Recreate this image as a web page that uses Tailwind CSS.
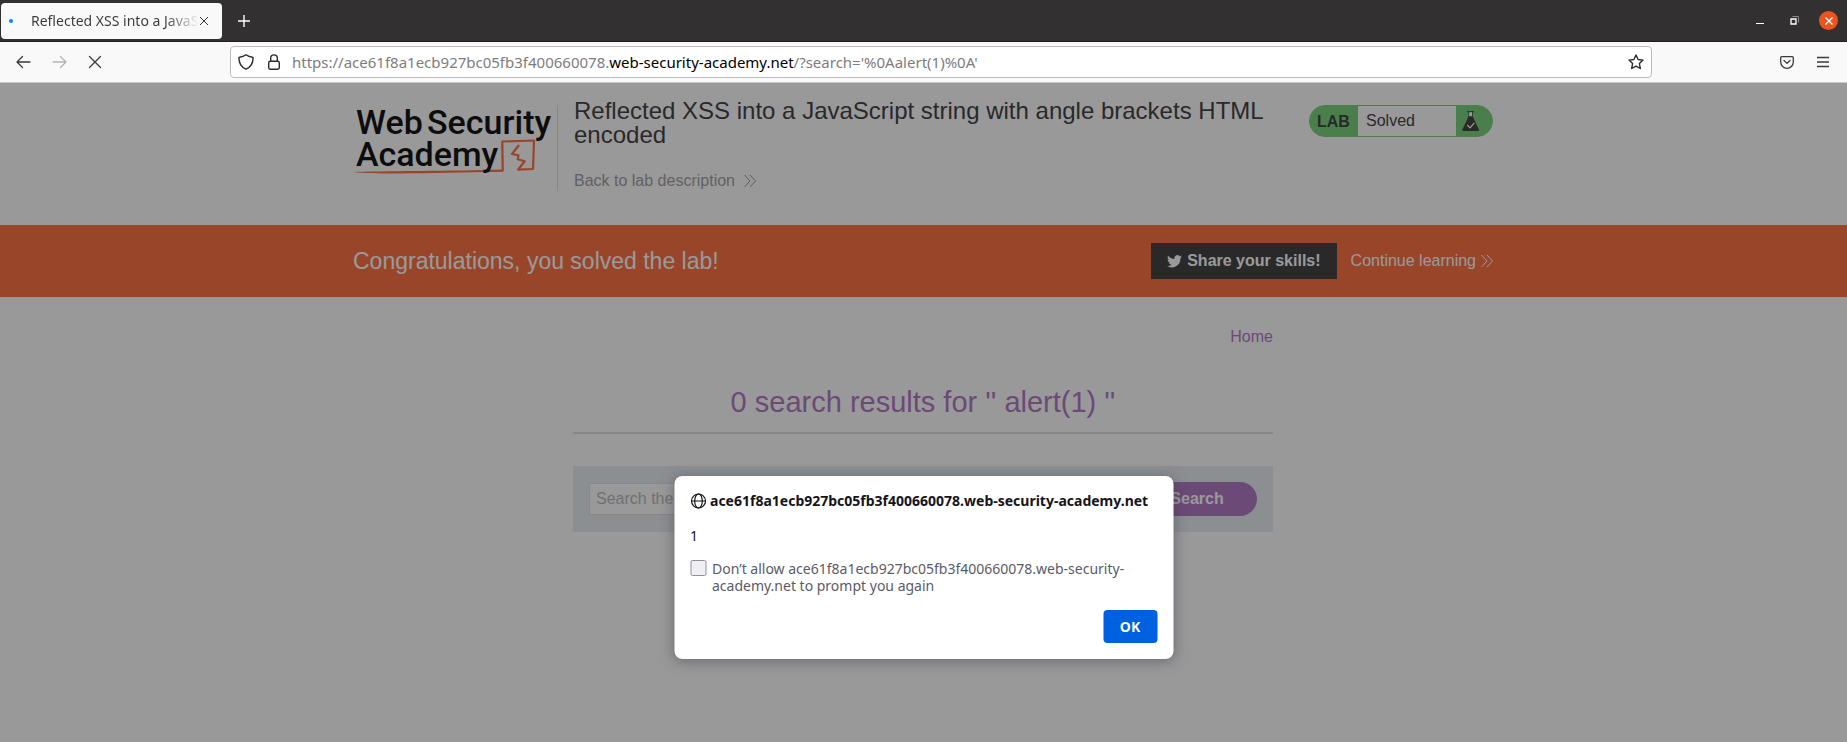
<!DOCTYPE html>
<html lang="en">
<head>
<meta charset="utf-8">
<title>Reflected XSS into a JavaScript string with angle brackets HTML encoded</title>
<script src="https://cdn.jsdelivr.net/npm/@tailwindcss/browser@4"></script>
</head>
<body class="flex min-h-screen flex-col bg-white font-['Noto_Sans',sans-serif] text-[#15141a]">

<!-- Tab strip -->
<header class="flex h-[42px] items-center border-b border-[#1f1e1e] bg-[#333031] pr-[9px] pl-px">
  <div class="flex h-9 w-[221px] items-center rounded bg-[#f9f9f9] pr-3 pl-2">
    <span class="size-1 rounded-full bg-[#0a84ff]"></span>
    <span class="ml-[18px] w-[168px] overflow-hidden bg-linear-to-r from-[#3a3a3c] from-80% to-transparent bg-clip-text text-sm whitespace-nowrap text-transparent">Reflected XSS into a JavaScript string</span>
    <button class="shrink-0" aria-label="Close tab"><svg class="block size-[10px]" viewBox="0 0 10 10" fill="none" stroke="#333" stroke-width="1"><path d="M1 1l8 8M9 1L1 9"/></svg></button>
  </div>
  <button class="ml-4" aria-label="New tab"><svg class="block size-3" viewBox="0 0 12 12" fill="none" stroke="#fff" stroke-width="1.4"><path d="M6 0v12M0 6h12"/></svg></button>
  <div class="ml-auto flex items-center">
    <button aria-label="Minimize"><svg class="block h-4 w-2" viewBox="0 0 8 16" fill="none" stroke="#fff"><path d="M0 10.500h8"/></svg></button>
    <button class="ml-[26px]" aria-label="Restore"><svg class="block size-[9px]" viewBox="0 0 9 9" fill="none"><path d="M2.500 .5h6v6" stroke="#8b898a"/><path d="M1 3h5v5H1z" stroke="#fff" stroke-width="1.300"/></svg></button>
    <button class="ml-5 flex size-[19px] items-center justify-center rounded-full bg-[#e95420]" aria-label="Close window"><svg class="block size-2" viewBox="0 0 8 8" fill="none" stroke="#fff" stroke-width="1.400"><path d="M.5.5l7 7M7.500.5l-7 7"/></svg></button>
  </div>
</header>

<!-- Navigation toolbar -->
<nav class="flex h-[41px] items-center border-b border-[#c9c9cb] bg-[#f9f9fa] px-4">
  <button aria-label="Back"><svg class="block h-3.5 w-[15px]" viewBox="0 0 15 14" fill="none" stroke="#3a3a3c" stroke-width="1.300" stroke-linecap="round" stroke-linejoin="round"><path d="M14 7H1M6.500 1.500L1 7l5.500 5.500"/></svg></button>
  <button class="ml-[21px]" aria-label="Forward" disabled><svg class="block h-3.5 w-[15px]" viewBox="0 0 15 14" fill="none" stroke="#b4b4b6" stroke-width="1.300" stroke-linecap="round" stroke-linejoin="round"><path d="M1 7h13M8.500 1.500L14 7l-5.500 5.500"/></svg></button>
  <button class="ml-[21px]" aria-label="Stop"><svg class="block size-3.5" viewBox="0 0 14 14" fill="none" stroke="#3a3a3c" stroke-width="1.300" stroke-linecap="round"><path d="M1.500 1.500l11 11M12.500 1.500l-11 11"/></svg></button>
  <div class="ml-32 flex h-8 flex-1 items-center rounded border border-[#bcbcbf] bg-white px-[7px]">
    <svg class="block size-4" viewBox="0 0 16 16" fill="none" stroke="#2a2a2e" stroke-width="1.400" stroke-linejoin="round"><path d="M8 .8C6.200 2.100 3.900 2.900 1.400 3.200c-.3 0-.5.3-.5.600 0 6 2.600 9.600 7.100 11.400 4.500-1.800 7.100-5.400 7.100-11.400 0-.3-.2-.600-.5-.600C12.100 2.900 9.800 2.100 8 .8z"/></svg>
    <svg class="ml-3 block size-4" viewBox="0 0 16 16" fill="none" stroke="#2a2a2e" stroke-width="1.400"><rect x="2.700" y="7.200" width="10.600" height="8" rx="1.600"/><path d="M4.700 7V4.200a3.300 3.300 0 0 1 6.600 0V7"/></svg>
    <div class="ml-[10px] flex-1 text-[15px] whitespace-nowrap text-[#7d7d80]">https://ace61f8a1ecb927bc05fb3f400660078.<span class="text-black">web-security-academy.net</span>/?search='%0Aalert(1)%0A'</div>
    <button aria-label="Bookmark this page"><svg class="block size-4" viewBox="0 0 16 16" fill="none" stroke="#2a2a2e" stroke-width="1.400" stroke-linejoin="round"><path d="M8 1l2.100 4.500 4.900.6-3.600 3.400.9 5L8 12.100l-4.300 2.400.9-5L1 6.100l4.900-.6z"/></svg></button>
  </div>
  <button class="ml-32" aria-label="Save to Pocket"><svg class="block h-[13px] w-3.5" viewBox="0 0 14 13" fill="none" stroke="#3a3a3c" stroke-width="1.300" stroke-linecap="round" stroke-linejoin="round"><path d="M1.800.7h10.400c.6 0 1.100.5 1.100 1.100V6a6.300 6.300 0 0 1-12.600 0V1.800C.7 1.200 1.200.7 1.800.7z"/><path d="M4 4.500l3 2.900 3-2.900"/></svg></button>
  <button class="ml-[23px]" aria-label="Open application menu"><svg class="mr-0.5 block h-3 w-3" viewBox="0 0 12 12" fill="none" stroke="#3a3a3c" stroke-width="1.300"><path d="M0 1.500h12M0 6h12M0 10.500h12"/></svg></button>
</nav>

<!-- Page -->
<div class="relative flex-1 font-['Liberation_Sans',Arial,sans-serif] text-[#333332]">
  <section class="pr-px">
    <div class="mx-auto flex h-[142px] w-full max-w-[1140px] items-start pt-4">
    <a href="#" class="mt-1 block w-[200px] shrink-0" aria-label="Web Security Academy">
      <svg class="block h-[76px] w-[200px] overflow-visible" viewBox="0 0 200 76" font-family="Roboto" font-weight="500" font-size="34" fill="#000">
        <path d="M149.700 67.500L149.300 38.500L181 37.500L180 66L165 66.700L171.700 58.300L164.700 56.300L165.500 52.300L159 51L166 42" fill="none" stroke="#ff6633" stroke-width="2.200" stroke-linejoin="round"/>
        <path d="M0 69C25 68 100 68 150.500 66.500v2.200C110 69.500 80 70 45 70.500 25 70.500 10 70.200 0 69z" fill="#ff6633"/>
        <text x="3" y="31">Web</text><text x="74" y="31">Security</text><text x="3" y="63">Academy</text>
      </svg>
    </a>
    <div class="mt-[6px] ml-1 h-[86px] w-px shrink-0 bg-[#dcdcde]"></div>
    <div class="ml-4 max-w-[704px] flex-1">
      <h2 class="text-2xl leading-6">Reflected XSS into a JavaScript string with angle brackets HTML encoded</h2>
      <a href="#" class="mt-[22px] flex items-center gap-[9px] text-base leading-6 text-[#9a9a9c]">Back to lab description
        <svg class="block size-3" viewBox="0 0 12 12" fill="none" stroke="#8d8d90"><path d="M.5 0l5.500 6-5.500 6M6 0l5.500 6L6 12"/></svg></a>
    </div>
    <div class="mt-[6px] ml-auto flex h-8 w-[184px] shrink-0 overflow-hidden rounded-full border border-[#70d072] bg-[#70d072]">
      <span class="w-12 pl-[7px] text-base leading-8 font-bold">LAB</span>
      <p class="w-[98px] bg-white pl-2 text-base leading-[30px]">Solved</p>
      <svg class="mt-[5px] ml-[6px] block h-5 w-[18px]" viewBox="0 0 18 20"><path d="M5 .7h7M7 1v5M10.200 1v5" stroke="#333332" fill="none"/><path d="M7.200 1.200h2.800v3.800H7.200z" fill="#fff"/><path d="M6.500 5.500h4.200L17 18.500c.3.700 0 1.500-.9 1.500H1.300c-.9 0-1.200-.8-.9-1.500z" fill="#333332"/><path d="M5.200 14l2.800 2.800 4.400-5" fill="none" stroke="#fff" stroke-width="1.200"/></svg>
    </div>
    </div>
  </section>

  <section class="bg-[#ff6633] pr-px">
    <div class="mx-auto flex h-[72px] w-full max-w-[1140px] items-center text-white">
      <h4 class="text-[23px]">Congratulations, you solved the lab!</h4>
      <button class="ml-auto flex h-9 items-center gap-[5px] bg-[#333332] px-4 text-base font-bold">
        <svg class="block size-[15px]" viewBox="1 2 22 20" fill="#fff"><path d="M23 4.900c-.8.400-1.700.6-2.600.7.900-.6 1.700-1.500 2-2.500-.9.500-1.900.9-2.900 1.100a4.500 4.500 0 0 0-7.700 4.100C8 8.100 4.700 6.300 2.500 3.600c-1.200 2-.6 4.700 1.400 6-.7 0-1.400-.2-2-.6 0 2.100 1.500 4.100 3.600 4.500-.7.200-1.400.2-2 .1.600 1.800 2.200 3.100 4.200 3.100A9 9 0 0 1 1 18.600 12.800 12.800 0 0 0 20.700 7.200c.9-.6 1.700-1.400 2.300-2.300z"/></svg>Share your skills!</button>
      <a href="#" class="ml-3.5 flex items-center gap-[5px] text-base">Continue learning
        <svg class="block size-3" viewBox="0 0 12 12" fill="none" stroke="#fff"><path d="M.5 0l5.500 6-5.500 6M6 0l5.500 6L6 12"/></svg></a>
    </div>
  </section>

  <main class="pr-px text-[#ae6fc0]">
    <div class="mx-auto w-full max-w-[700px]">
    <div class="flex justify-end pt-7 text-base leading-6"><a href="#">Home</a></div>
    <h1 class="mt-[35px] border-b-2 border-[#dededf] pb-3 text-center text-[29px] leading-9">0 search results for '' alert(1) ''</h1>
    <form class="mt-8 flex h-[66px] items-center bg-[#e8edf0] px-4">
      <input type="text" aria-label="Search the blog" placeholder="Search the blog..." class="h-8 min-w-0 flex-1 border border-[#dedee2] bg-white px-1.5 text-base placeholder:text-[#b4b4b8]">
      <button type="button" class="h-[34px] w-[120px] rounded-full bg-[#ae6fc0] text-base font-bold text-white">Search</button>
    </form>
    </div>
  </main>

  <!-- Alert -->
  <div class="absolute inset-0 bg-[#1c1c1e]/45"></div>
  <div role="dialog" aria-labelledby="origin" class="absolute top-[393px] left-1/2 w-[499px] -translate-x-1/2 rounded-lg bg-white p-4 font-['Noto_Sans',sans-serif] text-sm text-[#15141a] shadow-[0_2px_14px_rgba(58,57,68,0.5)]">
    <div class="flex items-center gap-1 leading-[18px] font-bold">
      <svg class="block size-4 shrink-0" viewBox="0 0 16 16" fill="none" stroke="#15141a" stroke-width="1.200"><circle cx="8" cy="8" r="7"/><ellipse cx="8" cy="8" rx="3.800" ry="7"/><path d="M1 8h14"/></svg>
      <span id="origin" class="whitespace-nowrap">ace61f8a1ecb927bc05fb3f400660078.web-security-academy.net</span>
    </div>
    <p class="mt-[17px] leading-[18px]">1</p>
    <label class="mt-[15px] flex items-start gap-[6px] leading-[17px] text-[#5b5b66]">
      <input type="checkbox" class="size-4 shrink-0 appearance-none rounded-xs border border-[#8f8f9d] bg-[#f0f0f4]">
      <span>Don’t allow ace61f8a1ecb927bc05fb3f400660078.web-security-academy.net to prompt you again</span>
    </label>
    <div class="mt-4 flex justify-end"><button class="h-[33px] w-[54px] rounded bg-[#0061e0] font-bold text-[#fbfbfe]">OK</button></div>
  </div>
</div>
</body>
</html>
